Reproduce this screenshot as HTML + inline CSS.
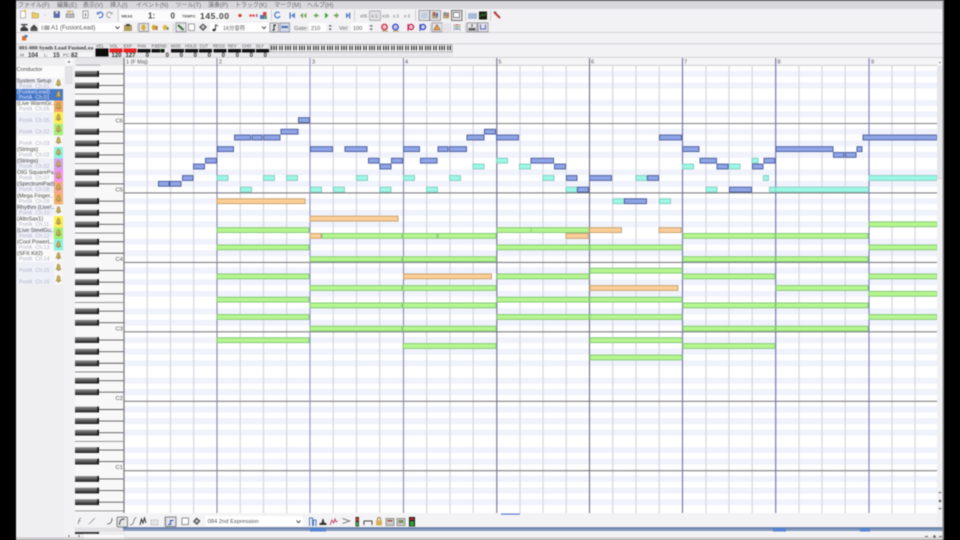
<!DOCTYPE html>
<html><head><meta charset="utf-8"><title>Piano Roll</title>
<style>
html,body{margin:0;padding:0;background:#000;width:960px;height:540px;overflow:hidden}
svg{position:absolute;left:0;top:0;filter:blur(.55px);font-family:"Liberation Sans","Noto Sans CJK JP",sans-serif}
.n rect{height:4.8px}
.b rect{fill:#8ea6e8;stroke:#51609f;stroke-width:1}
.t rect{fill:#9df8e6;stroke:#84cfc2;stroke-width:1}
.g rect{fill:#b6f68e;stroke:#86c97a;stroke-width:1}
.o rect{fill:#fbcf96;stroke:#c9a272;stroke-width:1}
.m text{font-size:6px;fill:#6a6a72}
.l1{font-size:5.6px;fill:#444}
.l2{font-size:5.3px;fill:#b0b4c6;word-spacing:2px}
.tiny{font-size:4.2px;fill:#555}
.val{font-size:6px;font-weight:bold;fill:#333;text-anchor:end}
.bx{fill:#e4e4e8;stroke:#8a8a92;stroke-width:.8}
</style></head><body>
<svg width="960" height="540" viewBox="0 0 960 540" xmlns="http://www.w3.org/2000/svg">
<defs>
<linearGradient id="k" x1="0" y1="0" x2="0" y2="1"><stop offset="0" stop-color="#959595"/><stop offset=".5" stop-color="#585858"/><stop offset="1" stop-color="#1c1c1c"/></linearGradient>
<g id="r" fill="#f0f2fc"><rect x="124" y="5.3" width="813" height="5.8"/><rect x="124" y="16.9" width="813" height="5.8"/><rect x="124" y="28.5" width="813" height="5.8"/><rect x="124" y="45.9" width="813" height="5.8"/><rect x="124" y="57.4" width="813" height="5.8"/></g>
<g id="oc">
<path d="M99 8.2H124M99 19.8H124M99 31.4H124M99 48.8H124M99 60.3H124" stroke="#555" stroke-width=".9"/>
<path d="M75 40.1H124" stroke="#777" stroke-width=".8"/>
<g fill="url(#k)"><rect x="75" y="5.3" width="24" height="5.8"/><rect x="75" y="16.9" width="24" height="5.8"/><rect x="75" y="28.5" width="24" height="5.8"/><rect x="75" y="45.9" width="24" height="5.8"/><rect x="75" y="57.4" width="24" height="5.8"/></g>
<g fill="#111"><rect x="97.3" y="5.3" width="1.7" height="5.8"/><rect x="97.3" y="16.9" width="1.7" height="5.8"/><rect x="97.3" y="28.5" width="1.7" height="5.8"/><rect x="97.3" y="45.9" width="1.7" height="5.8"/><rect x="97.3" y="57.4" width="1.7" height="5.8"/></g>
</g>
<g id="sp"><path d="M58.5 -3.5c-1 0-1.500 1.500-1.500 3s-1 2-1.200 2.500h5.400c-.2-.5-1.200-1-1.200-2.500s-.5-3-1.500-3Z" fill="#c8ae50" stroke="#8f7f48" stroke-width=".5"/><rect x="57.700" y="2" width="1.600" height="1.300" fill="#8f7f48"/></g>
</defs>

<!-- window -->
<rect x="16" y="0" width="928" height="540" fill="#f2f2f4"/>
<rect x="16" y="0" width="928" height="1.2" fill="#85858a"/>
<rect x="16" y="1.2" width="928" height="7.800" fill="#d8d8dd"/>
<g class="m">
<text x="18" y="7">ファイル(F)</text><text x="57" y="7">編集(E)</text><text x="83" y="7">表示(V)</text><text x="110" y="7">挿入(I)</text><text x="136" y="7">イベント(N)</text><text x="175.500" y="7">ツール(T)</text><text x="208" y="7">演奏(P)</text><text x="235" y="7">トラック(K)</text><text x="274" y="7">マーク(M)</text><text x="307" y="7">ヘルプ(H)</text>
</g>
<rect x="16" y="32" width="928" height=".9" fill="#cfcfd4"/>
<rect x="16" y="43.200" width="928" height="1.300" fill="#dadade"/>
<rect x="16" y="57" width="928" height=".8" fill="#c8c8cc"/>
<rect x="16" y="44.500" width="437" height="12.500" fill="#e9e9ec"/>

<!-- row 1 -->
<rect x="20.500" y="11" width="5" height="7" fill="#fff" stroke="#999" stroke-width=".7"/><circle cx="25" cy="11" r="1.200" fill="#e8c030"/>
<path d="M32 18V12.500h2.500l1 1H38.500V18Z" fill="#eccb66" stroke="#a88a3a" stroke-width=".5"/>
<rect x="44" y="14" width="2" height="2" fill="#ddd"/>
<rect x="54" y="11.500" width="5.500" height="6" fill="#5a6fb8" stroke="#334" stroke-width=".4"/><rect x="55.500" y="11.500" width="2.500" height="2" fill="#dde"/>
<rect x="67" y="11" width="6" height="3" fill="#eee" stroke="#888" stroke-width=".5"/><rect x="66" y="14" width="8" height="3.500" fill="#bbb" stroke="#777" stroke-width=".5"/><rect x="68" y="11" width="3" height="1.500" fill="#e0b040"/>
<rect x="83" y="11" width="5" height="7" fill="#fff" stroke="#777" stroke-width=".7"/><rect x="85" y="13" width="1" height="3.500" fill="#666"/>
<path d="M97.500 14.500a2.700 2.700 0 1 1 1.500 2.800" fill="none" stroke="#4a72c8" stroke-width="1.200"/><path d="M96.500 12l1 3 2-1.500Z" fill="#4a72c8"/>
<path d="M112 14.500a2.700 2.700 0 1 0-1.500 2.800" fill="none" stroke="#aaa" stroke-width="1.200"/><path d="M113 12l-1 3-2-1.500Z" fill="#aaa"/>
<rect x="117.500" y="9.800" width="1" height="12" fill="#d0d0d4"/>
<rect x="120" y="10.500" width="108" height="10.500" fill="#fbfbfb"/>
<text x="121.500" y="17.500" style="font-size:3.800px;fill:#555;font-weight:bold">MEAS</text>
<text x="148" y="18.500" style="font-size:8px;font-weight:bold;fill:#444">1:</text>
<text x="170.500" y="18.500" style="font-size:8px;font-weight:bold;fill:#444">0</text>
<text x="182" y="17.500" style="font-size:3.800px;fill:#555;font-weight:bold">TEMPO</text>
<text x="200" y="18.800" style="font-size:8.500px;font-weight:bold;fill:#444;letter-spacing:.6px">145.00</text>
<circle cx="240" cy="15.500" r="1.600" fill="#d83030"/>
<circle cx="250.500" cy="15.500" r="1.300" fill="#d85050"/><circle cx="253.500" cy="15.500" r="1.300" fill="#d85050"/><rect x="256" y="14" width="1.500" height="3" fill="#a06090"/>
<rect x="260" y="15" width="4" height="4" fill="#5570c0"/><rect x="263" y="12" width="3.500" height="4" fill="#c05050"/><rect x="264" y="16" width="3" height="3" fill="#60a060"/>
<rect x="271" y="10" width="1" height="11" fill="#d0d0d4"/>
<path d="M279.500 13a2.800 2.800 0 1 0 .6 3" fill="none" stroke="#4a78c8" stroke-width="1.300"/>
<rect x="289.500" y="12.500" width="1.200" height="6" fill="#4a60c0"/><path d="M295 12.500v6l-4-3Z" fill="#5a80c8"/>
<path d="M303 12.500v6l-3-3Zm3.500 0v6l-3-3Z" fill="#80a860"/>
<path d="M316.500 13v5l-3-2.500Z" fill="#70a860"/><rect x="316.500" y="14.500" width="2" height="2" fill="#80a860"/>
<path d="M325 12.500v6l3.500-3Z" fill="#40a040"/>
<path d="M336 12.500v6l3-3Z" fill="#80a860"/><rect x="334" y="14.500" width="2" height="2" fill="#80a860"/>
<path d="M346 12.500v6l3-3Z" fill="#5a80c8"/><rect x="349" y="12.500" width="1.200" height="6" fill="#4a60c0"/>
<rect x="354" y="10" width="1" height="11" fill="#d0d0d4"/>
<rect x="369.500" y="11" width="11" height="9.500" rx="1" fill="#e2e2e6" stroke="#999" stroke-width=".7"/>
<g style="font-size:4.500px;fill:#666"><text x="360" y="17.500">x05</text><text x="371.500" y="17.500">x 1</text><text x="382" y="17.500">x15</text><text x="393" y="17.500">x 2</text><text x="404" y="17.500">x 3</text></g>
<rect x="415" y="10" width="1" height="11" fill="#d0d0d4"/>
<rect x="419" y="10.500" width="10.500" height="10" class="bx"/><rect x="421" y="12.500" width="6.500" height="6" fill="#c0cce0"/>
<rect x="430" y="10.500" width="10.500" height="10" class="bx"/><rect x="432" y="12.500" width="6" height="6" fill="#b8a878"/><rect x="433" y="12" width="2" height="4" fill="#c05050"/><rect x="436" y="13" width="2" height="4" fill="#5070b8"/>
<rect x="443" y="12.500" width="6" height="6" fill="#b8a878"/><rect x="444" y="12" width="2" height="4" fill="#7090c0"/><rect x="447" y="13" width="2" height="4" fill="#c07050"/>
<rect x="451.500" y="10.500" width="10.500" height="10" class="bx" style="stroke:#555"/><rect x="453.500" y="12.500" width="6" height="5" fill="#fff" stroke="#666" stroke-width=".8"/>
<rect x="465" y="10" width="1" height="11" fill="#d0d0d4"/>
<rect x="468" y="13" width="9" height="6" fill="#a8bcd8"/>
<rect x="479" y="11.500" width="8" height="8" fill="#1c1c10"/><path d="M480 17l2-3 2 2 2-3" stroke="#40a040" fill="none" stroke-width=".7"/>
<rect x="490" y="10" width="1" height="11" fill="#d0d0d4"/>
<path d="M494 12l6 6" stroke="#c03838" stroke-width="2"/><path d="M494 11.500l2.500 1" stroke="#777" stroke-width="1.200"/>

<!-- row 2 -->
<rect x="21" y="24" width="6.500" height="1.200" fill="#333"/><path d="M24 25l-3.500 3.500h7Z" fill="#555"/><rect x="20.500" y="28.500" width="7.500" height="2.500" fill="#333"/>
<path d="M34 24.500l-3.500 3.500h7Z" fill="#444"/><rect x="30.500" y="28" width="7" height="3" fill="#555"/>
<rect x="39.500" y="23" width="83" height="9" fill="#fff"/>
<rect x="41.500" y="25.500" width="8" height="4.500" fill="#aaa"/><rect x="42.500" y="25.500" width="2" height="4.500" fill="#e4e4e4"/>
<text x="51" y="29.600" style="font-size:6px;fill:#555">A1 (FusionLead)</text>
<path d="M115.500 26.500l2 2.200 2-2.200" stroke="#333" stroke-width=".9" fill="none"/>
<rect x="124" y="25" width="8" height="6" fill="#b09c58"/><rect x="126" y="24" width="4" height="2" fill="#444"/>
<rect x="137" y="23.500" width="1" height="8" fill="#d0d0d4"/>
<rect x="139" y="23.500" width="9.500" height="8" class="bx"/><ellipse cx="143.500" cy="27.500" rx="2.200" ry="3" fill="#d8b040"/>
<ellipse cx="154" cy="27.500" rx="2.200" ry="2.800" fill="#d0a830"/><rect x="156" y="26" width="1.500" height="4" fill="#a06040"/>
<ellipse cx="165" cy="27.500" rx="2.200" ry="2.800" fill="#d8b848"/><rect x="167" y="27" width="1.500" height="3" fill="#608060"/>
<rect x="173" y="23.500" width="1" height="8" fill="#d0d0d4"/>
<rect x="176" y="22.800" width="10" height="9" class="bx"/><path d="M178 25l5.500 5" stroke="#3a6a3a" stroke-width="2"/>
<rect x="188.500" y="24" width="6" height="6.500" fill="#fff" stroke="#666" stroke-width=".6"/>
<path d="M203 23.500l4 3.500-4 4-4-4Z" fill="#555"/><path d="M203 25l2 2-2 2-2-2Z" fill="#ccc"/>
<rect x="210" y="23" width="59" height="9" fill="#fff"/>
<rect x="215" y="24.500" width=".9" height="5.500" fill="#333"/><ellipse cx="214" cy="30" rx="1.600" ry="1.200" fill="#333"/><path d="M216 24.500l2 2" stroke="#333" stroke-width=".8"/>
<text x="223" y="29.800" style="font-size:5.400px;fill:#555">16分音符</text>
<path d="M262 26.500l2 2.200 2-2.200" stroke="#333" stroke-width=".9" fill="none"/>
<rect x="270" y="23" width="8.500" height="9" class="bx"/><path d="M274 24.500v5.500m0 .5l-1.500-.8m2-5l1.500 1" stroke="#222" stroke-width="1"/>
<rect x="280" y="23" width="9.500" height="9" class="bx" style="fill:#d0d8ec"/><rect x="281.500" y="26" width="6.500" height="2" fill="#4a6ab0"/>
<text x="294" y="29.800" style="font-size:5.800px;fill:#666">Gate:</text>
<rect x="309" y="23" width="17" height="9" fill="#fff"/><text x="311" y="29.800" style="font-size:5.500px;fill:#555">210</text>
<path d="M328.500 26.500l1.700-1.800 1.700 1.800m-3.400 2l1.700 1.800 1.700-1.800" fill="#555"/>
<text x="339" y="29.800" style="font-size:5.800px;fill:#666">Vel:</text>
<rect x="351" y="23" width="17" height="9" fill="#fff"/><text x="353" y="29.800" style="font-size:5.500px;fill:#555">100</text>
<path d="M369.500 26.500l1.700-1.800 1.700 1.800m-3.400 2l1.700 1.800 1.700-1.800" fill="#555"/>
<circle cx="384.500" cy="27" r="2.800" fill="#f0c0c8" stroke="#c82840" stroke-width="1.200"/><path d="M382 31h6" stroke="#b0a060"/>
<circle cx="395.500" cy="27" r="2.800" fill="#c0c8f0" stroke="#3040c0" stroke-width="1.200"/><path d="M393 31h6" stroke="#b0a060"/>
<circle cx="411" cy="27" r="2.600" fill="#f0c0d0" stroke="#c02050" stroke-width="1.200"/><rect x="407.500" y="24" width="1" height="7" fill="#c02050"/>
<circle cx="423" cy="27" r="2.600" fill="#c8d0f0" stroke="#3040c0" stroke-width="1.200"/><rect x="419.500" y="24" width="1" height="7" fill="#3040c0"/>
<rect x="430" y="23.500" width="1" height="8" fill="#d0d0d4"/>
<rect x="432" y="22.800" width="10" height="9" class="bx"/><path d="M437 24.500l3.200 5.500h-6.400Z" fill="#dfa050" stroke="#885520" stroke-width=".6"/>
<rect x="442" y="23" width="9.500" height="8.800" fill="#e4e4e8"/>
<path d="M454 24v7M460 24v7" stroke="#888" stroke-width=".6"/><path d="M455 25h4" stroke="#d05050"/><path d="M455 27h4" stroke="#50a050"/><path d="M455 29h4" stroke="#5070c0"/>
<rect x="465" y="23.500" width="1" height="8" fill="#d0d0d4"/>
<rect x="467" y="22.800" width="10" height="9" class="bx"/><path d="M472 24v3M469 28.500h6v1.500h-6Z" stroke="#555" fill="#777"/>
<rect x="478" y="22.800" width="10" height="9" class="bx"/><path d="M480.500 24.500v4.500h5v-4.500" fill="none" stroke="#5060c0" stroke-width="1"/>

<!-- row 3 icon -->
<rect x="22" y="36" width="4.200" height="4.500" fill="#e07028"/><rect x="24.500" y="35" width="3" height="2.500" fill="#5078c8"/>

<!-- meter row -->
<text x="19" y="49.600" style="font-size:5.600px;font-weight:bold;fill:#333;font-family:'Liberation Serif',serif">001-088 Synth Lead FusionLea</text>
<rect x="19" y="52.500" width="74" height="4.500" fill="#f4f4f6"/>
<g style="font-size:4.500px;fill:#555"><text x="20" y="56.600">M:</text><text x="44" y="56.600">L:</text><text x="63" y="56.600">PC:</text></g>
<g style="font-size:6px;font-weight:bold;fill:#333"><text x="28" y="56.800">104</text><text x="53" y="56.800">15</text><text x="71" y="56.800">82</text></g>
<g class="tiny"><text x="96" y="47.500">VEL</text><text x="109.500" y="47.500">VOL</text><text x="123.500" y="47.500">EXP</text><text x="137.500" y="47.500">PAN</text><text x="151.500" y="47.500">P.BEND</text><text x="171" y="47.500">MOD</text><text x="185" y="47.500">HOLD</text><text x="199.500" y="47.500">CUT</text><text x="213" y="47.500">REGS</text><text x="228" y="47.500">REV</text><text x="242" y="47.500">CHO</text><text x="256" y="47.500">DLY</text></g>
<rect x="95.500" y="48.500" width="13" height="8" fill="#0c0c0c"/>
<rect x="109.500" y="48.500" width="13" height="4" fill="#e02020"/><rect x="123.500" y="48.500" width="13" height="4" fill="#e82020"/>
<g fill="#111"><rect x="137.500" y="49" width="13" height="3.500"/><rect x="151.500" y="49" width="13" height="3.500"/><rect x="171" y="49" width="13" height="3.500"/><rect x="185" y="49" width="13" height="3.500"/><rect x="199" y="49" width="13" height="3.500"/><rect x="213.500" y="49" width="13" height="3.500"/><rect x="228" y="49" width="13" height="3.500"/><rect x="242" y="49" width="13" height="3.500"/><rect x="256" y="49" width="13" height="3.500"/></g>
<rect x="160" y="49" width="1" height="3.500" fill="#3a8a3a"/>
<g class="val"><text x="121.500" y="57">120</text><text x="135.500" y="57">127</text><text x="149" y="57">0</text><text x="169" y="57">0</text><text x="183" y="57">0</text><text x="197" y="57">0</text><text x="211" y="57">0</text><text x="225" y="57">0</text><text x="239" y="57">0</text><text x="253" y="57">0</text><text x="267" y="57">0</text></g>
<rect x="270" y="44.800" width="182" height="7" fill="#fafafa" stroke="#777" stroke-width=".5"/>
<path d="M271 48H451" stroke="#222" stroke-width="4.500" stroke-dasharray="1.200 1.200 1.200 1.200 1.200 2.200 1.200 1.200 1.200 2.200"/>

<!-- left columns -->
<rect x="16" y="58" width="48" height="482" fill="#efeff1"/>
<rect x="64" y="58" width="11" height="482" fill="#f2f2f4"/>
<rect x="66" y="66.500" width="6" height="17" fill="#e4e4e8" stroke="#cfcfd3" stroke-width=".5"/>
<rect x="66" y="58.500" width="6" height="7" fill="#f8f8f8"/><path d="M67.500 62.500l1.500-1.800 1.500 1.800Z" fill="#555"/>

<!-- track list -->
<rect x="16" y="66" width="48" height="12" fill="#fbfbfb"/>
<rect x="16" y="78.500" width="38" height="11" fill="#eef0f8"/>
<rect x="16" y="100.600" width="38" height="11.500" fill="#fafafa"/><rect x="16" y="112.200" width="38" height="11.500" fill="#eef0f8"/>
<rect x="16" y="123.800" width="38" height="11.500" fill="#eef0f8"/><rect x="16" y="135.400" width="38" height="11.500" fill="#fafafa"/>
<rect x="16" y="146.900" width="38" height="11.500" fill="#fafafa"/><rect x="16" y="158.500" width="38" height="11.500" fill="#eef0f8"/>
<rect x="16" y="170" width="38" height="11.500" fill="#fafafa"/><rect x="16" y="181.600" width="38" height="11.500" fill="#eef0f8"/>
<rect x="16" y="193" width="38" height="11.500" fill="#fafafa"/><rect x="16" y="204.500" width="38" height="11.500" fill="#eef0f8"/>
<rect x="16" y="216" width="38" height="11.500" fill="#fafafa"/><rect x="16" y="227.500" width="38" height="11.500" fill="#eef0f8"/>
<rect x="16" y="239" width="38" height="11.500" fill="#fafafa"/><rect x="16" y="250.500" width="38" height="11.500" fill="#fafafa"/>
<rect x="16" y="262" width="38" height="11.500" fill="#eef0f8"/><rect x="16" y="273.500" width="38" height="11.500" fill="#eef0f8"/>
<rect x="16" y="89" width="47" height="11.500" fill="#4878c8"/>
<g>
<rect x="54" y="78.500" width="9" height="10.500" fill="#f6f6f8"/><rect x="54" y="100.600" width="9" height="11.500" fill="#f4a860"/><rect x="54" y="112.200" width="9" height="11.500" fill="#fff050"/><rect x="54" y="123.800" width="9" height="11.500" fill="#a4f070"/><rect x="54" y="135.400" width="9" height="11.500" fill="#f6f6f6"/><rect x="54" y="146.900" width="9" height="11.500" fill="#88f4e0"/><rect x="54" y="158.500" width="9" height="11.500" fill="#d8a0f0"/><rect x="54" y="170" width="9" height="11.500" fill="#f890f0"/><rect x="54" y="181.600" width="9" height="11.500" fill="#f8a890"/><rect x="54" y="193" width="9" height="11.500" fill="#f8b070"/><rect x="54" y="204.500" width="9" height="11.500" fill="#f6f6f6"/><rect x="54" y="216" width="9" height="11.500" fill="#fff050"/><rect x="54" y="227.500" width="9" height="11.500" fill="#a4f070"/><rect x="54" y="239" width="9" height="11.500" fill="#88f4e0"/><rect x="54" y="250.500" width="9" height="11.500" fill="#f6f6f6"/><rect x="54" y="262" width="9" height="11.500" fill="#f6f6f6"/><rect x="54" y="273.500" width="9" height="11.500" fill="#f6f6f6"/>
</g>
<use href="#sp" y="83"/><use href="#sp" y="94.500"/><use href="#sp" y="106"/><use href="#sp" y="117.500"/><use href="#sp" y="129"/><use href="#sp" y="140.500"/><use href="#sp" y="152"/><use href="#sp" y="164"/><use href="#sp" y="175.500"/><use href="#sp" y="187"/><use href="#sp" y="198.500"/><use href="#sp" y="210"/><use href="#sp" y="221.500"/><use href="#sp" y="233"/><use href="#sp" y="244.500"/><use href="#sp" y="256"/><use href="#sp" y="267.500"/><use href="#sp" y="279"/>
<text class="l1" x="16.500" y="71">Conductor</text>
<text class="l1" x="16.500" y="82.500">System Setup</text><text class="l2" x="19" y="87.800">PortA Ch.01</text>
<text class="l1" x="17" y="93.500" style="fill:#e4ecff">(FusionLead)</text><text class="l2" x="19" y="98.800" style="fill:#dce6ff">PortA Ch.01</text>
<text class="l1" x="17" y="105">(Live WarmGr..</text><text class="l2" x="19" y="110.300">PortA Ch.05</text>
<text class="l2" x="19" y="122">PortA Ch.05</text>
<text class="l2" x="19" y="133.500">PortA Ch.02</text>
<text class="l2" x="19" y="145">PortA Ch.03</text>
<text class="l1" x="17" y="151">(Strings)</text><text class="l2" x="19" y="156.500">PortA Ch.02</text>
<text class="l1" x="17" y="162.500">(Strings)</text><text class="l2" x="19" y="168">PortA Ch.02</text>
<text class="l1" x="17" y="174">OIG SquarePa..</text><text class="l2" x="19" y="179.500">PortA Ch.07</text>
<text class="l1" x="17" y="185.500">(SpectrumPad)</text><text class="l2" x="19" y="191">PortA Ch.08</text>
<text class="l1" x="17" y="197.500">(Mega Finger..</text><text class="l2" x="19" y="203">PortA Ch.09</text>
<text class="l1" x="17" y="209">Rhythm (Live!..</text><text class="l2" x="19" y="214.500">PortA Ch.10</text>
<text class="l1" x="17" y="220.500">(AltoSax1)</text><text class="l2" x="19" y="226">PortA Ch.11</text>
<text class="l1" x="17" y="232">(Live SteelGu..</text><text class="l2" x="19" y="237.500">PortA Ch.12</text>
<text class="l1" x="17" y="243.500">(Cool PowerL..</text><text class="l2" x="19" y="249">PortA Ch.13</text>
<text class="l1" x="17" y="255">(SFX Kit2)</text><text class="l2" x="19" y="260.500">PortA Ch.14</text>
<text class="l2" x="19" y="272">PortA Ch.15</text>
<text class="l2" x="19" y="283.500">PortA Ch.16</text>

<!-- piano -->
<rect x="75" y="58" width="49" height="455" fill="#f8f8f8"/>
<use href="#oc" y="54.050"/><use href="#oc" y="123.500"/><use href="#oc" y="192.950"/><use href="#oc" y="262.400"/><use href="#oc" y="331.850"/><use href="#oc" y="401.300"/><use href="#oc" y="470.750"/>
<rect x="75" y="58" width="49" height="7.500" fill="#e6e6e9"/>
<rect x="76" y="64.500" width="24" height="1.300" fill="#b8b8bc"/>
<g style="font-size:5.800px;fill:#555"><text x="115.500" y="122.500">C6</text><text x="115.500" y="191.500">C5</text><text x="115.500" y="261">C4</text><text x="115.500" y="330.500">C3</text><text x="115.500" y="400">C2</text><text x="115.500" y="469">C1</text></g>

<!-- ruler -->
<rect x="124" y="57.800" width="813" height="8" fill="#f4f4f6"/>
<rect x="124" y="65" width="813" height=".7" fill="#c0c0c4"/>
<g style="font-size:5.500px;fill:#555"><text x="126" y="63.500">1 (F Maj)</text><text x="219" y="63.500">2</text><text x="312" y="63.500">3</text><text x="405" y="63.500">4</text><text x="498.500" y="63.500">5</text><text x="591" y="63.500">6</text><text x="684" y="63.500">7</text><text x="777.500" y="63.500">8</text><text x="871" y="63.500">9</text></g>

<!-- grid -->
<rect x="124" y="66" width="813" height="447" fill="#fff"/>
<clipPath id="gc"><rect x="124" y="66" width="813" height="447"/></clipPath>
<g clip-path="url(#gc)"><use href="#r" y="54.050"/><use href="#r" y="123.500"/><use href="#r" y="192.950"/><use href="#r" y="262.400"/><use href="#r" y="331.850"/><use href="#r" y="401.300"/><use href="#r" y="470.750"/></g>
<path d="M147.200 65V513M170.500 65V513M193.700 65V513M240.200 65V513M263.500 65V513M286.700 65V513M333.200 65V513M356.500 65V513M379.700 65V513M426.700 65V513M450 65V513M473.200 65V513M520 65V513M543 65V513M566.200 65V513M612.700 65V513M636 65V513M659.200 65V513M706 65V513M729 65V513M752.200 65V513M799 65V513M822 65V513M845.200 65V513M892 65V513M915 65V513" stroke="#d8d8e2" stroke-width="1.300"/>
<path d="M124 123.500H937M124 192.900H937M124 262.400H937M124 331.800H937M124 401.300H937M124 470.700H937" stroke="#808084" stroke-width="1.100"/>
<g stroke-width="1.100">
<path d="M217 58V513" stroke="#8686a6"/><path d="M310 58V513" stroke="#9090c8"/><path d="M403.500 58V513" stroke="#8888b8"/><path d="M496.800 58V513" stroke="#707088"/><path d="M589.500 58V513" stroke="#707082"/><path d="M682.500 58V513" stroke="#7070a8"/><path d="M775.700 58V513" stroke="#6a6ab0"/><path d="M869 58V513" stroke="#7a7ac0"/>
</g>
<path d="M124 58V513" stroke="#777" stroke-width="1.200"/>

<!-- notes -->
<g class="n">
<g class="g">
<g transform="translate(0,221.900)"><rect x="869" width="68"/></g>
<g transform="translate(0,227.700)"><rect x="217" width="92"/><rect x="497" width="34"/><rect x="531" width="58"/></g>
<g transform="translate(0,233.500)"><rect x="322" width="80"/><rect x="403" width="34"/><rect x="438" width="58"/><rect x="683" width="92"/><rect x="776" width="92"/></g>
<g transform="translate(0,245)"><rect x="217" width="92"/><rect x="497" width="92"/><rect x="590" width="92"/><rect x="869" width="68"/></g>
<g transform="translate(0,256.700)"><rect x="310" width="92"/><rect x="403" width="93"/><rect x="683" width="92"/><rect x="776" width="92"/></g>
<g transform="translate(0,268.300)"><rect x="590" width="92"/></g>
<g transform="translate(0,274)"><rect x="217" width="92"/><rect x="497" width="92"/><rect x="683" width="92"/><rect x="869" width="68"/></g>
<g transform="translate(0,285.600)"><rect x="310" width="92"/><rect x="403" width="93"/><rect x="776" width="92"/></g>
<g transform="translate(0,291.400)"><rect x="869" width="68"/></g>
<g transform="translate(0,297.200)"><rect x="217" width="92"/><rect x="497" width="92"/><rect x="590" width="92"/></g>
<g transform="translate(0,303)"><rect x="310" width="92"/><rect x="403" width="93"/><rect x="683" width="92"/><rect x="776" width="92"/></g>
<g transform="translate(0,314.600)"><rect x="217" width="92"/><rect x="497" width="92"/><rect x="590" width="92"/><rect x="869" width="68"/></g>
<g transform="translate(0,326.200)"><rect x="310" width="92"/><rect x="403" width="93"/><rect x="683" width="92"/><rect x="776" width="92"/></g>
<g transform="translate(0,337.800)"><rect x="217" width="92"/><rect x="590" width="92"/></g>
<g transform="translate(0,343.600)"><rect x="403" width="93"/><rect x="683" width="92"/></g>
<g transform="translate(0,355.100)"><rect x="590" width="92"/></g>
</g>
<g class="o">
<g transform="translate(0,198.800)"><rect x="217" width="88"/></g>
<g transform="translate(0,216.200)"><rect x="310" width="88"/></g>
<g transform="translate(0,227.700)"><rect x="589.500" width="32"/><rect x="659" width="22"/></g>
<g transform="translate(0,233.500)"><rect x="310" width="11"/><rect x="566" width="22"/></g>
<g transform="translate(0,274)"><rect x="403.500" width="88"/></g>
<g transform="translate(0,285.600)"><rect x="590" width="88"/></g>
</g>
<g class="t">
<g transform="translate(0,158.300)"><rect x="496.500" width="11"/><rect x="752" width="6"/></g>
<g transform="translate(0,164.100)"><rect x="473" width="11"/><rect x="519.500" width="11"/><rect x="682.500" width="11"/><rect x="729" width="11"/></g>
<g transform="translate(0,175.600)"><rect x="217" width="11"/><rect x="263.500" width="11"/><rect x="286.500" width="11"/><rect x="356.500" width="11"/><rect x="403.500" width="11"/><rect x="449.500" width="11"/><rect x="543" width="11"/><rect x="636" width="11"/><rect x="763.500" width="5"/><rect x="869" width="68"/></g>
<g transform="translate(0,187.200)"><rect x="240.500" width="11"/><rect x="310.500" width="11"/><rect x="333.500" width="11"/><rect x="380" width="11"/><rect x="426.500" width="11"/><rect x="566" width="11"/><rect x="706" width="11"/><rect x="769.500" width="6"/><rect x="775.500" width="93"/></g>
<g transform="translate(0,198.800)"><rect x="613" width="11"/><rect x="659.500" width="11"/></g>
</g>
<g class="b">
<g transform="translate(0,117.700)"><rect x="298.500" width="11"/></g>
<g transform="translate(0,129.300)"><rect x="281" width="17"/><rect x="484.500" width="11"/></g>
<g transform="translate(0,135.100)"><rect x="234.500" width="16"/><rect x="252" width="10"/><rect x="263.500" width="16.500"/><rect x="467" width="17"/><rect x="496.500" width="22"/><rect x="659.500" width="22"/><rect x="863" width="74"/></g>
<g transform="translate(0,146.700)"><rect x="217.500" width="16"/><rect x="310.500" width="22"/><rect x="345" width="22"/><rect x="403.500" width="16"/><rect x="438" width="10"/><rect x="449.500" width="17"/><rect x="682.500" width="16.500"/><rect x="776" width="57"/><rect x="857" width="5"/></g>
<g transform="translate(0,152.500)"><rect x="833.500" width="10.500"/><rect x="845.500" width="10.500"/></g>
<g transform="translate(0,158.300)"><rect x="205.500" width="11"/><rect x="368.500" width="10.500"/><rect x="391.500" width="11"/><rect x="420.500" width="16.500"/><rect x="531" width="22.500"/><rect x="700" width="16.500"/><rect x="764" width="11"/></g>
<g transform="translate(0,164.100)"><rect x="193.500" width="11"/><rect x="380" width="11"/><rect x="554.500" width="11"/><rect x="717" width="11"/><rect x="752.500" width="10.500"/></g>
<g transform="translate(0,175.600)"><rect x="182.500" width="10.500"/><rect x="566.500" width="10.500"/><rect x="589.500" width="22"/><rect x="647.500" width="11"/></g>
<g transform="translate(0,181.400)"><rect x="158.500" width="10.500"/><rect x="170" width="11"/></g>
<g transform="translate(0,187.200)"><rect x="577.500" width="11"/><rect x="729.500" width="22"/></g>
<g transform="translate(0,198.800)"><rect x="624.500" width="22"/></g>
</g>
</g>

<!-- right scrollbar -->
<rect x="937" y="58" width="5.500" height="482" fill="#f0f0f2"/>
<rect x="937" y="66" width="5.500" height="112" fill="#e6e6ea"/>
<rect x="937" y="178" width="5.500" height=".6" fill="#c4c4c8"/>
<rect x="938" y="59" width="4" height="6" fill="#f8f8f8"/><path d="M939 63l1-1.500 1 1.500Z" fill="#555"/>
<path d="M938.500 492.500h3M938.500 501h3M940 499.500v3M938.500 508.500h3" stroke="#333" stroke-width=".8"/>

<!-- bottom toolbar -->
<rect x="75" y="513" width="862" height="14.500" fill="#f3f3f5"/>
<path d="M78 524l1.500-5 1.500-1M78.500 521h2" stroke="#888" stroke-width=".9" fill="none"/>
<path d="M89 524l6-6" stroke="#888" stroke-width=".7"/>
<path d="M107 524c3 0 5-2 5-6" stroke="#555" stroke-width=".8" fill="none"/>
<rect x="117" y="517" width="10.500" height="10" rx="1.500" class="bx" style="stroke:#666"/><path d="M119.500 525c0-4 1-6 5-6" stroke="#444" stroke-width="1" fill="none"/>
<path d="M130 525c2 0 3-1 3.500-3s1-4 3-4.500" stroke="#666" stroke-width=".7" fill="none"/>
<path d="M140 525l1.500-6 1.500 4 1.500-5 1.500 5" stroke="#333" stroke-width="1" fill="none"/>
<rect x="151" y="520" width="7" height="5" fill="#e6e6e6" stroke="#bbb" stroke-width=".7"/>
<rect x="164" y="517" width="1" height="9" fill="#cfcfd4"/>
<rect x="165.500" y="517" width="10.500" height="9.500" class="bx" style="stroke:#666"/><path d="M168 524.500h2.500v-4h3" stroke="#3050c0" stroke-width="1.100" fill="none"/>
<rect x="182" y="518" width="6.500" height="6.500" fill="#fff" stroke="#666" stroke-width=".7"/>
<path d="M196.500 517.500l4 3.500-3.500 4-4-3.500Z" fill="#555"/><path d="M196.500 519.500l2 1.500-1.500 2-2-1.500Z" fill="#ccc"/>
<rect x="205.500" y="516" width="97.500" height="10" fill="#fff"/>
<text x="207.500" y="522.800" style="font-size:5.800px;fill:#555">084 2nd Expression</text>
<path d="M296.500 520.500l2 2.200 2-2.200" stroke="#333" stroke-width=".9" fill="none"/>
<path d="M309.500 526V518h3v8M313.500 526V520h2.500v6" fill="none" stroke="#5078c0" stroke-width="1"/>
<path d="M319.500 525h7v-2h-2l-1-4h-1l-1 4h-2Z" fill="#333"/>
<path d="M330 525l2-5 1.500 3 1.500-4 1 3 1.500-1" fill="none" stroke="#c03050" stroke-width=".8"/>
<path d="M342.500 518.500l7 2.500-7 2.500" fill="none" stroke="#666" stroke-width=".9"/>
<rect x="355.500" y="517" width="3.500" height="9.500" fill="#2a2a2a"/><rect x="356" y="518" width="2.500" height="3" fill="#d03030"/><rect x="356" y="522" width="2.500" height="4" fill="#40a040"/>
<path d="M364 525v-4h8v4M365 521h6" stroke="#444" stroke-width="1" fill="none"/>
<rect x="376" y="520.500" width="6" height="5" fill="#d8b050"/><path d="M377.500 520.500v-1.500a1.500 1.500 0 0 1 3 0v1.500" stroke="#a08030" fill="none"/>
<rect x="386" y="518.500" width="8" height="7" fill="#ccc" stroke="#776" stroke-width=".7"/><rect x="387.500" y="520" width="5" height="1.500" fill="#a05050"/>
<rect x="397" y="518.500" width="8" height="7" fill="#ccc" stroke="#776" stroke-width=".7"/><rect x="398.500" y="520" width="5" height="3" fill="#7a9060"/>
<rect x="409" y="517" width="6" height="9.500" fill="#141414"/><rect x="410" y="518" width="4" height="2" fill="#c03030"/><rect x="410" y="521" width="4" height="5" fill="#30a030"/>

<!-- bottom bars -->
<rect x="75" y="527.500" width="49" height="4.500" fill="#e0e0e3"/>
<rect x="123" y="527.500" width="820" height="3.500" fill="#8299c0"/>
<rect x="123" y="527.300" width="820" height="1.100" fill="#566c94"/>
<rect x="310" y="528" width="16" height="3.500" fill="#5484d4"/>
<rect x="773" y="528" width="13" height="3.500" fill="#5484d4"/>
<rect x="860" y="528" width="10" height="3.500" fill="#5484d4"/>
<rect x="501" y="513.500" width="19" height="1.200" fill="#5a80cc"/>
<rect x="16" y="537.700" width="928" height="1" fill="#b0b0b4"/>
<rect x="83" y="534" width="42" height="4" fill="#fbfbfb" stroke="#d0d0d4" stroke-width=".5"/>
<path d="M68 536l1.500-1.200v2.400ZM78 536l1.500-1.200v2.400Z" fill="#555"/>
<path d="M925 536.500h3M933 536.500h3M934.500 535v3M939 536.500h3" stroke="#333" stroke-width=".8"/>
<rect x="942.500" y="0" width="1.500" height="540" fill="#8d8d92"/>
</svg>
</body></html>
